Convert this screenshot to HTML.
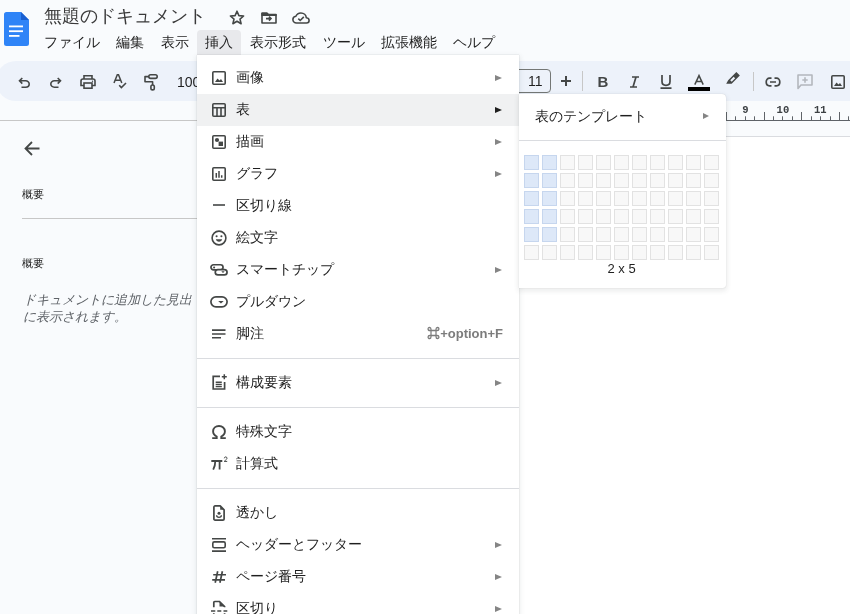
<!DOCTYPE html>
<html lang="ja"><head><meta charset="utf-8">
<style>
html,body{margin:0;padding:0;}body{will-change:transform;}
body{width:850px;height:614px;overflow:hidden;position:relative;background:#ffffff;font-family:"Liberation Sans",sans-serif;color:#1f1f1f;}
.a{position:absolute;}
svg{position:absolute;overflow:visible;}
.top{left:0;top:0;width:850px;height:120px;background:#f9fbfd;}
.side{left:0;top:120px;width:197px;height:494px;background:#f9fbfd;}
.title{left:44px;top:4px;font-size:18px;color:#3a3a3a;white-space:nowrap;line-height:24px;}
.mb{top:33px;font-size:14px;line-height:18px;white-space:nowrap;color:#1f1f1f;}
.tb{left:-4px;top:61px;width:900px;height:40px;background:#edf2fa;border-radius:20px;}
.menu{left:197px;top:55px;width:322px;height:600px;background:#fff;box-shadow:0 2px 5px 1px rgba(60,64,67,.10),0 0 1px rgba(60,64,67,.25);}
.mi{position:absolute;left:0;width:322px;height:32px;}
.mi .t{position:absolute;left:39px;top:7px;font-size:14px;line-height:18px;white-space:nowrap;color:#1f1f1f;}
.mi .arr{position:absolute;left:298px;top:13.5px;width:0;height:0;border-left:7.4px solid #858585;border-top:3.6px solid transparent;border-bottom:3.6px solid transparent;}
.sep{position:absolute;left:0;width:322px;height:1px;background:#dadce0;}
.sub{left:519px;top:94px;width:207px;height:194px;background:#fff;border-radius:0 4px 3px 0;box-shadow:0 2px 5px 1px rgba(60,64,67,.10),0 0 1px rgba(60,64,67,.25);}
.cell{position:absolute;width:13px;height:13px;border:1px solid #e2e2e2;background:#f8f8f8;}
.cell.on{border-color:#c6d6ee;background:#dde8f8;}
</style></head>
<body>
<div class="a top"></div>
<div class="a side"></div>

<!-- Docs logo -->
<svg style="left:4px;top:12px" width="25" height="34" viewBox="0 0 25 34">
  <path d="M2.5 0H17L25 8V31.5A2.5 2.5 0 0 1 22.5 34H2.5A2.5 2.5 0 0 1 0 31.5V2.5A2.5 2.5 0 0 1 2.5 0Z" fill="#2f84f7"/>
  <path d="M17 0L25 8H17Z" fill="#1a5fd0"/>
  <rect x="5" y="13.5" width="14" height="1.8" fill="#fff"/>
  <rect x="5" y="18.3" width="14" height="1.8" fill="#fff"/>
  <rect x="5" y="23" width="10.5" height="1.8" fill="#fff"/>
</svg>

<div class="a title">無題のドキュメント</div>

<!-- star -->
<svg style="left:229px;top:10px" width="16" height="15" viewBox="0 0 16 15">
  <path d="M8 1.2L9.9 5.6L14.6 6L11 9.1L12.1 13.7L8 11.2L3.9 13.7L5 9.1L1.4 6L6.1 5.6Z" fill="none" stroke="#444746" stroke-width="1.6" stroke-linejoin="round"/>
</svg>
<!-- folder move -->
<svg style="left:261px;top:12px" width="16" height="12" viewBox="0 0 16 12">
  <path d="M1 11V1.2H6L7.3 2.5H15V11Z" fill="none" stroke="#444746" stroke-width="1.6" stroke-linejoin="round"/>
  <path d="M1 1.2H6L7.3 2.5H15V3.4H1Z" fill="#444746" stroke="#444746" stroke-width="1.2" stroke-linejoin="round"/>
  <path d="M5 6.6H9.5M8 4.6L10 6.6L8 8.6" fill="none" stroke="#444746" stroke-width="1.6"/>
</svg>
<!-- cloud done -->
<svg style="left:292px;top:12px" width="18" height="12" viewBox="0 0 18 12">
  <path d="M4.5 11C2.4 11 0.9 9.5 0.9 7.6C0.9 5.9 2.2 4.5 3.9 4.3C4.7 2.3 6.6 1 8.9 1C11.8 1 14.1 3.1 14.3 5.8C16 6 17.1 7.3 17.1 8.6C17.1 10 16 11 14.5 11Z" fill="none" stroke="#444746" stroke-width="1.6" stroke-linejoin="round"/>
  <path d="M6.3 6.7L8.2 8.5L11.8 4.9" fill="none" stroke="#444746" stroke-width="1.6"/>
</svg>

<!-- menu bar -->
<div class="a" style="left:197px;top:30px;width:44px;height:25px;background:#e8e9ec;border-radius:4px 4px 0 0;"></div>
<div class="a mb" style="left:44px">ファイル</div>
<div class="a mb" style="left:116px">編集</div>
<div class="a mb" style="left:161px">表示</div>
<div class="a mb" style="left:205px">挿入</div>
<div class="a mb" style="left:250px">表示形式</div>
<div class="a mb" style="left:323px">ツール</div>
<div class="a mb" style="left:381px">拡張機能</div>
<div class="a mb" style="left:453px">ヘルプ</div>

<!-- toolbar -->
<div class="a tb"></div>
<!-- undo -->
<svg style="left:18px;top:77px" width="12" height="11" viewBox="0 0 12 11">
  <path d="M3.5 10.2H7.6C9.6 10.2 11.2 8.8 11.2 7C11.2 5.2 9.6 3.8 7.6 3.8H1.5M4.3 1L1.5 3.8L4.3 6.6" fill="none" stroke="#444746" stroke-width="1.6"/>
</svg>
<!-- redo -->
<svg style="left:50px;top:77px" width="12" height="11" viewBox="0 0 12 11">
  <path d="M8.5 10.2H4.4C2.4 10.2 0.8 8.8 0.8 7C0.8 5.2 2.4 3.8 4.4 3.8H10.5M7.7 1L10.5 3.8L7.7 6.6" fill="none" stroke="#444746" stroke-width="1.6"/>
</svg>
<!-- print -->
<svg style="left:80px;top:75px" width="16" height="14" viewBox="0 0 16 14">
  <path d="M4 4V0.8H12V4" fill="none" stroke="#444746" stroke-width="1.6"/>
  <path d="M4 10.5H1V6C1 4.9 1.9 4 3 4H13C14.1 4 15 4.9 15 6V10.5H12" fill="none" stroke="#444746" stroke-width="1.6"/>
  <rect x="4" y="8" width="8" height="5.2" fill="none" stroke="#444746" stroke-width="1.6"/>
  <circle cx="12.5" cy="6.3" r="0.7" fill="#444746"/>
</svg>
<!-- spellcheck -->
<svg style="left:113px;top:74px" width="14" height="15" viewBox="0 0 14 15">
  <path d="M1 9L4.3 0.8H5.5L8.8 9M2.3 6.3H7.5" fill="none" stroke="#444746" stroke-width="1.5"/>
  <path d="M6.2 11.2L8.4 13.6L13 9" fill="none" stroke="#444746" stroke-width="1.6"/>
</svg>
<!-- paint format -->
<svg style="left:144px;top:74px" width="14" height="17" viewBox="0 0 14 17">
  <rect x="4.8" y="0.8" width="8.4" height="3.6" rx="1.8" fill="none" stroke="#444746" stroke-width="1.6"/>
  <path d="M4.8 2.6H1V7.7H8.6V11" fill="none" stroke="#444746" stroke-width="1.6" stroke-linejoin="round"/>
  <rect x="6.9" y="11" width="3.4" height="4.9" rx="1.7" fill="none" stroke="#444746" stroke-width="1.6"/>
</svg>
<div class="a" style="left:177px;top:74px;font-size:14px;line-height:16px;color:#1f1f1f;">100%</div>

<!-- right toolbar -->
<div class="a" style="left:500px;top:69px;width:49px;height:22px;border:1px solid #747775;border-radius:4px;"></div>
<div class="a" style="left:528px;top:73px;font-size:14px;line-height:16px;color:#1f1f1f;">11</div>
<svg style="left:561px;top:76px" width="10" height="10" viewBox="0 0 10 10">
  <path d="M5 0V10M0 5H10" stroke="#444746" stroke-width="2"/>
</svg>
<div class="a" style="left:582px;top:71px;width:1px;height:20px;background:#c7c7c7;"></div>
<div class="a" style="left:597.5px;top:72.5px;font-size:15px;font-weight:bold;line-height:17px;color:#444746;">B</div>
<svg style="left:628.5px;top:76px" width="11" height="12" viewBox="0 0 11 12">
  <path d="M3 1H10M1 11H8M7 1L4 11" fill="none" stroke="#444746" stroke-width="1.7"/>
</svg>
<svg style="left:660px;top:75px" width="12" height="14" viewBox="0 0 12 14">
  <path d="M2 0V6.5C2 8.8 3.8 10.3 6 10.3C8.2 10.3 10 8.8 10 6.5V0M0.5 13.2H11.5" fill="none" stroke="#444746" stroke-width="1.7"/>
</svg>
<svg style="left:694px;top:75px" width="10" height="10" viewBox="0 0 10 10">
  <path d="M0.8 9.6L5 0.6L9.2 9.6M2.2 6.6H7.8" fill="none" stroke="#444746" stroke-width="1.5"/>
</svg>
<div class="a" style="left:688px;top:87px;width:22px;height:4px;background:#000;"></div>
<svg style="left:722px;top:68px" width="22" height="20" viewBox="0 0 22 20">
  <path fill-rule="evenodd" d="M14.35 4.05L17.85 7.55L9.65 15.75L4.2 15.75L6.15 12.25Z M13.17 10.25L9.73 13.69L8.21 12.17L11.65 8.73Z" fill="#444746"/>
</svg>
<div class="a" style="left:753px;top:72px;width:1px;height:19px;background:#c7c7c7;"></div>
<svg style="left:765px;top:77px" width="16" height="10" viewBox="0 0 16 10">
  <path d="M6.5 1.2H4.5C2.6 1.2 1.2 2.8 1.2 5C1.2 7.2 2.6 8.8 4.5 8.8H6.5M9.5 1.2H11.5C13.4 1.2 14.8 2.8 14.8 5C14.8 7.2 13.4 8.8 11.5 8.8H9.5M5 5H11" fill="none" stroke="#444746" stroke-width="1.7"/>
</svg>
<svg style="left:797px;top:74px" width="16" height="15" viewBox="0 0 16 15">
  <path d="M1 14.5V1H15V11H4Z" fill="none" stroke="#b3b7bd" stroke-width="1.6" stroke-linejoin="round"/>
  <path d="M8 3.3V8.7M5.3 6H10.7" stroke="#b3b7bd" stroke-width="1.6"/>
</svg>
<svg style="left:831px;top:75px" width="14" height="14" viewBox="0 0 14 14">
  <rect x="0.8" y="0.8" width="12.4" height="12.4" rx="1" fill="none" stroke="#444746" stroke-width="1.6"/>
  <path d="M3 11L5.5 7.5L7.5 9.5L9 8L11 11Z" fill="#444746"/>
</svg>

<!-- ruler / page line -->
<div class="a" style="left:519px;top:120px;width:331px;height:16px;background:#f9fbfd;"></div>
<div class="a" style="left:0;top:120px;width:197px;height:1px;background:#c7c7c7;"></div>
<div class="a" style="left:519px;top:136px;width:331px;height:1px;background:#dadce0;"></div>
<svg style="left:726px;top:101px" width="124" height="20" viewBox="0 0 124 20">
  <path d="M0 19.5H124" stroke="#5f6368" stroke-width="1"/>
  <path d="M0.5 11V19M9.5 15.3V19M19.5 15.3V19M28.5 15.3V19M38.5 11V19M47.5 15.3V19M56.5 15.3V19M66.5 15.3V19M75.5 11V19M85.5 15.3V19M94.5 15.3V19M104.5 15.3V19M113.5 11V19M122.5 15.3V19" stroke="#5f6368" stroke-width="1"/>
  <text x="19.3" y="12" text-anchor="middle" font-family="Liberation Mono" font-size="10.5" font-weight="bold" fill="#3c4043">9</text>
  <text x="56.9" y="12" text-anchor="middle" font-family="Liberation Mono" font-size="10.5" font-weight="bold" fill="#3c4043">10</text>
  <text x="94.2" y="12" text-anchor="middle" font-family="Liberation Mono" font-size="10.5" font-weight="bold" fill="#3c4043">11</text>
</svg>

<!-- sidebar -->
<svg style="left:24px;top:141px" width="16" height="15" viewBox="0 0 16 15">
  <path d="M15.5 7.5H1.8M8 1L1.5 7.5L8 14" fill="none" stroke="#444746" stroke-width="1.8"/>
</svg>
<div class="a" style="left:22px;top:187px;font-size:11px;line-height:14px;color:#1f1f1f;">概要</div>
<div class="a" style="left:22px;top:218px;width:175px;height:1px;background:#c7c7c7;"></div>
<div class="a" style="left:22px;top:256px;font-size:11px;line-height:14px;color:#1f1f1f;">概要</div>
<div class="a" style="left:23px;top:291px;font-size:13px;line-height:17px;color:#5f6368;font-style:italic;white-space:nowrap;">ドキュメントに追加した見出<br>に表示されます。</div>

<!-- main menu -->
<div class="a menu">
  <div class="mi" style="top:6px"><span class="t">画像</span><span class="arr"></span></div>
  <div class="mi" style="top:38px;"><div style="position:absolute;left:0;top:1px;width:322px;height:32px;background:#f0f1f2"></div><span class="t">表</span><span class="arr" style="border-left-color:#1f1f1f"></span></div>
  <div class="mi" style="top:70px"><span class="t">描画</span><span class="arr"></span></div>
  <div class="mi" style="top:102px"><span class="t">グラフ</span><span class="arr"></span></div>
  <div class="mi" style="top:134px"><span class="t">区切り線</span></div>
  <div class="mi" style="top:166px"><span class="t">絵文字</span></div>
  <div class="mi" style="top:198px"><span class="t">スマートチップ</span><span class="arr"></span></div>
  <div class="mi" style="top:230px"><span class="t">プルダウン</span></div>
  <div class="mi" style="top:262px"><span class="t">脚注</span><span style="position:absolute;right:16px;top:9px;font-size:13px;line-height:16px;font-weight:bold;color:#7c7c7c;">⌘+option+F</span></div>
  <div class="sep" style="top:303px"></div>
  <div class="mi" style="top:311px"><span class="t">構成要素</span><span class="arr"></span></div>
  <div class="sep" style="top:352px"></div>
  <div class="mi" style="top:360px"><span class="t">特殊文字</span></div>
  <div class="mi" style="top:392px"><span class="t">計算式</span></div>
  <div class="sep" style="top:433px"></div>
  <div class="mi" style="top:441px"><span class="t">透かし</span></div>
  <div class="mi" style="top:473px"><span class="t">ヘッダーとフッター</span><span class="arr"></span></div>
  <div class="mi" style="top:505px"><span class="t">ページ番号</span><span class="arr"></span></div>
  <div class="mi" style="top:537px"><span class="t">区切り</span><span class="arr"></span></div>
</div>

<!-- menu icons (absolute page coords) -->
<!-- image -->
<svg style="left:212px;top:71px" width="14" height="14" viewBox="0 0 14 14">
  <rect x="0.8" y="0.8" width="12.4" height="12.4" rx="1" fill="none" stroke="#444746" stroke-width="1.6"/>
  <path d="M3 11L5.5 7.5L7.5 9.5L9 8L11 11Z" fill="#444746"/>
</svg>
<!-- table -->
<svg style="left:212px;top:103px" width="14" height="14" viewBox="0 0 14 14">
  <rect x="0.8" y="0.8" width="12.4" height="12.4" rx="1" fill="none" stroke="#444746" stroke-width="1.6"/>
  <path d="M0.8 4.8H13.2M5 4.8V13.2M9 4.8V13.2" stroke="#444746" stroke-width="1.6"/>
</svg>
<!-- drawing -->
<svg style="left:212px;top:135px" width="14" height="14" viewBox="0 0 14 14">
  <rect x="0.8" y="0.8" width="12.4" height="12.4" rx="1" fill="none" stroke="#444746" stroke-width="1.6"/>
  <circle cx="5" cy="5" r="2.1" fill="#444746"/>
  <rect x="6.6" y="6.6" width="4.4" height="4.4" fill="#444746"/>
</svg>
<!-- chart -->
<svg style="left:212px;top:167px" width="14" height="14" viewBox="0 0 14 14">
  <rect x="0.8" y="0.8" width="12.4" height="12.4" rx="1" fill="none" stroke="#444746" stroke-width="1.6"/>
  <path d="M4.3 6V10.8M7 4V10.8M9.7 8.3V10.8" stroke="#444746" stroke-width="1.5"/>
</svg>
<!-- horizontal line -->
<svg style="left:213px;top:204px" width="12" height="2" viewBox="0 0 12 2">
  <path d="M0 1H12" stroke="#444746" stroke-width="1.6"/>
</svg>
<!-- emoji -->
<svg style="left:211px;top:230px" width="16" height="16" viewBox="0 0 16 16">
  <circle cx="8" cy="8" r="6.9" fill="none" stroke="#444746" stroke-width="1.6"/>
  <circle cx="5.6" cy="6.2" r="1.05" fill="#444746"/><circle cx="10.4" cy="6.2" r="1.05" fill="#444746"/>
  <path d="M4.8 9.2H11.2C10.8 10.7 9.6 11.7 8 11.7C6.4 11.7 5.2 10.7 4.8 9.2Z" fill="#444746"/>
</svg>
<!-- smart chip -->
<svg style="left:210px;top:263px" width="18" height="13" viewBox="0 0 18 13">
  <rect x="0.95" y="1.75" width="12.1" height="5.15" rx="2.57" fill="none" stroke="#444746" stroke-width="1.7"/>
  <circle cx="4.1" cy="4.5" r="1.05" fill="#444746"/>
  <rect x="5.25" y="6.65" width="11.8" height="5.3" rx="2.65" fill="#fff" stroke="#444746" stroke-width="1.7"/>
  <path d="M11.3 8.2H14.7L13 9.9Z" fill="#444746"/>
</svg>
<!-- dropdown -->
<svg style="left:210px;top:295px" width="18" height="13" viewBox="0 0 18 13">
  <rect x="0.9" y="1.8" width="16.2" height="10.1" rx="5.05" fill="none" stroke="#444746" stroke-width="1.7"/>
  <path d="M8.2 5.9H13.7L10.95 8.6Z" fill="#444746"/>
</svg>
<!-- footnote -->
<svg style="left:212px;top:328px" width="14" height="12" viewBox="0 0 14 12">
  <path d="M0 2.1H13.5M0 6H13.5M0 9.8H9" stroke="#444746" stroke-width="1.6"/>
</svg>
<!-- building blocks -->
<svg style="left:211px;top:374px" width="16" height="16" viewBox="0 0 16 16">
  <path d="M9 2.3H2.2V15H13.6V8" fill="none" stroke="#444746" stroke-width="1.7"/>
  <path d="M13.3 0.3V5.3M10.8 2.8H15.8" stroke="#444746" stroke-width="1.5"/>
  <path d="M4.7 8.2H10.8M4.7 10.5H10.8M4.7 12.6H10.8" stroke="#444746" stroke-width="1.4"/>
</svg>
<!-- omega -->
<svg style="left:212px;top:425px" width="14" height="14" viewBox="0 0 14 14">
  <path d="M0.2 13.1H4.7V11.5C2.5 10.5 1.1 8.6 1.1 6.3C1.1 3 3.7 1 7 1C10.3 1 12.9 3 12.9 6.3C12.9 8.6 11.5 10.5 9.3 11.5V13.1H13.8" fill="none" stroke="#444746" stroke-width="1.9"/>
</svg>
<!-- pi2 -->
<svg style="left:211px;top:456px" width="17" height="14" viewBox="0 0 17 14">
  <path d="M0.3 5H11.3" stroke="#444746" stroke-width="2"/>
  <path d="M4.3 5C4.3 8.5 3.6 11 2.2 13.6M8.6 5V13.6" fill="none" stroke="#444746" stroke-width="1.8"/>
  <path d="M13.3 2.3C13.3 1.4 14 0.9 14.7 0.9C15.5 0.9 16 1.4 16 2.1C16 3 15.2 3.7 13.2 5.4H16.2" fill="none" stroke="#444746" stroke-width="1"/>
</svg>
<!-- watermark -->
<svg style="left:213px;top:505px" width="12" height="16" viewBox="0 0 12 16">
  <path d="M0.9 2.1C0.9 1.4 1.4 0.9 2.1 0.9H7.2L11.1 4.8V13.9C11.1 14.6 10.6 15.1 9.9 15.1H2.1C1.4 15.1 0.9 14.6 0.9 13.9Z" fill="none" stroke="#444746" stroke-width="1.7" stroke-linejoin="round"/>
  <path d="M7.2 0.9V4.8H11.1Z" fill="#444746"/>
  <circle cx="6" cy="8.3" r="1.5" fill="#444746"/>
  <path d="M3.6 10.3C3.6 11.6 4.5 12.3 6 12.3C7.5 12.3 8.4 11.6 8.4 10.3" fill="none" stroke="#444746" stroke-width="1.3"/>
</svg>
<!-- header footer -->
<svg style="left:212px;top:537px" width="14" height="16" viewBox="0 0 14 16">
  <path d="M0 1.8H14M0 14.1H14" stroke="#444746" stroke-width="1.6"/>
  <rect x="0.8" y="4.9" width="12.4" height="5.8" rx="1.5" fill="none" stroke="#444746" stroke-width="1.6"/>
</svg>
<!-- hash -->
<svg style="left:212px;top:571px" width="14" height="12" viewBox="0 0 14 12">
  <path d="M5.7 0.2L3.2 11.8M10.4 0.2L7.9 11.8M1.2 3.75H14M0.2 8.9H13" fill="none" stroke="#444746" stroke-width="1.7"/>
</svg>
<!-- break -->
<svg style="left:211px;top:600px" width="17" height="16" viewBox="0 0 17 16">
  <path d="M2.8 7.3V2.5C2.8 1.9 3.2 1.5 3.8 1.5H8.5L13.6 6.6V7.3" fill="none" stroke="#444746" stroke-width="1.7"/>
  <path d="M8.5 1.5V6.6H13.6Z" fill="#444746"/>
  <path d="M0 11H4.3M6.3 11H10.3M12.5 11H16.3" stroke="#444746" stroke-width="1.7"/>
  <path d="M2.8 13.3V16M13.6 13.3V16" stroke="#444746" stroke-width="1.7"/>
</svg>

<!-- submenu -->
<div class="a sub">
  <div class="a" style="left:16px;top:13px;font-size:14px;line-height:18px;color:#1f1f1f;white-space:nowrap;">表のテンプレート</div>
  <span class="a" style="left:183.5px;top:18.5px;width:0;height:0;border-left:6.5px solid #858585;border-top:3.3px solid transparent;border-bottom:3.3px solid transparent;"></span>
  <div class="a" style="left:0;top:46px;width:207px;height:1px;background:#dadce0;"></div>
  <div class="cell on" style="left:5px;top:61px"></div>
<div class="cell on" style="left:23px;top:61px"></div>
<div class="cell" style="left:41px;top:61px"></div>
<div class="cell" style="left:59px;top:61px"></div>
<div class="cell" style="left:77px;top:61px"></div>
<div class="cell" style="left:95px;top:61px"></div>
<div class="cell" style="left:113px;top:61px"></div>
<div class="cell" style="left:131px;top:61px"></div>
<div class="cell" style="left:149px;top:61px"></div>
<div class="cell" style="left:167px;top:61px"></div>
<div class="cell" style="left:185px;top:61px"></div>
<div class="cell on" style="left:5px;top:79px"></div>
<div class="cell on" style="left:23px;top:79px"></div>
<div class="cell" style="left:41px;top:79px"></div>
<div class="cell" style="left:59px;top:79px"></div>
<div class="cell" style="left:77px;top:79px"></div>
<div class="cell" style="left:95px;top:79px"></div>
<div class="cell" style="left:113px;top:79px"></div>
<div class="cell" style="left:131px;top:79px"></div>
<div class="cell" style="left:149px;top:79px"></div>
<div class="cell" style="left:167px;top:79px"></div>
<div class="cell" style="left:185px;top:79px"></div>
<div class="cell on" style="left:5px;top:97px"></div>
<div class="cell on" style="left:23px;top:97px"></div>
<div class="cell" style="left:41px;top:97px"></div>
<div class="cell" style="left:59px;top:97px"></div>
<div class="cell" style="left:77px;top:97px"></div>
<div class="cell" style="left:95px;top:97px"></div>
<div class="cell" style="left:113px;top:97px"></div>
<div class="cell" style="left:131px;top:97px"></div>
<div class="cell" style="left:149px;top:97px"></div>
<div class="cell" style="left:167px;top:97px"></div>
<div class="cell" style="left:185px;top:97px"></div>
<div class="cell on" style="left:5px;top:115px"></div>
<div class="cell on" style="left:23px;top:115px"></div>
<div class="cell" style="left:41px;top:115px"></div>
<div class="cell" style="left:59px;top:115px"></div>
<div class="cell" style="left:77px;top:115px"></div>
<div class="cell" style="left:95px;top:115px"></div>
<div class="cell" style="left:113px;top:115px"></div>
<div class="cell" style="left:131px;top:115px"></div>
<div class="cell" style="left:149px;top:115px"></div>
<div class="cell" style="left:167px;top:115px"></div>
<div class="cell" style="left:185px;top:115px"></div>
<div class="cell on" style="left:5px;top:133px"></div>
<div class="cell on" style="left:23px;top:133px"></div>
<div class="cell" style="left:41px;top:133px"></div>
<div class="cell" style="left:59px;top:133px"></div>
<div class="cell" style="left:77px;top:133px"></div>
<div class="cell" style="left:95px;top:133px"></div>
<div class="cell" style="left:113px;top:133px"></div>
<div class="cell" style="left:131px;top:133px"></div>
<div class="cell" style="left:149px;top:133px"></div>
<div class="cell" style="left:167px;top:133px"></div>
<div class="cell" style="left:185px;top:133px"></div>
<div class="cell" style="left:5px;top:151px"></div>
<div class="cell" style="left:23px;top:151px"></div>
<div class="cell" style="left:41px;top:151px"></div>
<div class="cell" style="left:59px;top:151px"></div>
<div class="cell" style="left:77px;top:151px"></div>
<div class="cell" style="left:95px;top:151px"></div>
<div class="cell" style="left:113px;top:151px"></div>
<div class="cell" style="left:131px;top:151px"></div>
<div class="cell" style="left:149px;top:151px"></div>
<div class="cell" style="left:167px;top:151px"></div>
<div class="cell" style="left:185px;top:151px"></div>
  <div class="a" style="left:88.5px;top:167px;font-size:13px;line-height:15px;color:#1f1f1f;white-space:nowrap;">2 x 5</div>
</div>
</body></html>
